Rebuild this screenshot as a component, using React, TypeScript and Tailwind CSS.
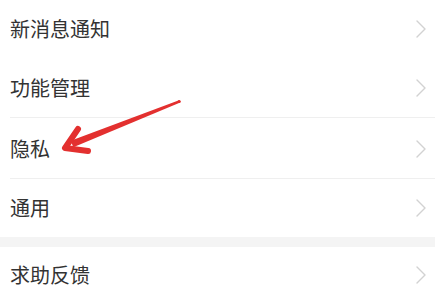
import React from "react";

const Chevron = () => (
  <svg width="12" height="20" viewBox="0 0 12 20" fill="none">
    <path d="M2 2 L10 10 L2 18" stroke="#d2d2d2" strokeWidth="1.4" strokeLinecap="round" strokeLinejoin="round" />
  </svg>
);

const Row = ({ label, h, divider }: { label: string; h: string; divider?: boolean }) => (
  <div className={`relative flex items-center justify-between pl-[10px] pr-[8px] ${h}`}>
    <span className="text-[20px] text-[#333333] leading-none" style={{ fontFamily: '"Noto Sans CJK SC", "Noto Sans", sans-serif' }}>
      {label}
    </span>
    <Chevron />
    {divider && <div className="absolute bottom-0 left-[10px] right-0 h-px bg-[#efefef]" />}
  </div>
);

export default function App() {
  return (
    <div className="relative w-[435px] h-[287px] overflow-hidden bg-white">
      <Row label="新消息通知" h="h-[57px]" />
      <Row label="功能管理" h="h-[61px]" divider />
      <Row label="隐私" h="h-[61px]" divider />
      <Row label="通用" h="h-[58px]" />
      <div className="h-[10px] bg-[#f4f4f4]" />
      <Row label="求助反馈" h="h-[56px]" />
      <svg className="absolute left-0 top-0" width="435" height="287" viewBox="0 0 435 287">
        <path d="M179.6 102.8 L180.3 101.2 L179 100.2 L70.7 140.8 L73.3 147.2 Z" fill="#e3302f" />
        <circle cx="179.2" cy="101.5" r="1.6" fill="#e3302f" />
        <path d="M78 129 L65 148 L88 151" stroke="#e3302f" strokeWidth="6" strokeLinecap="round" strokeLinejoin="round" fill="none" />
      </svg>
    </div>
  );
}
